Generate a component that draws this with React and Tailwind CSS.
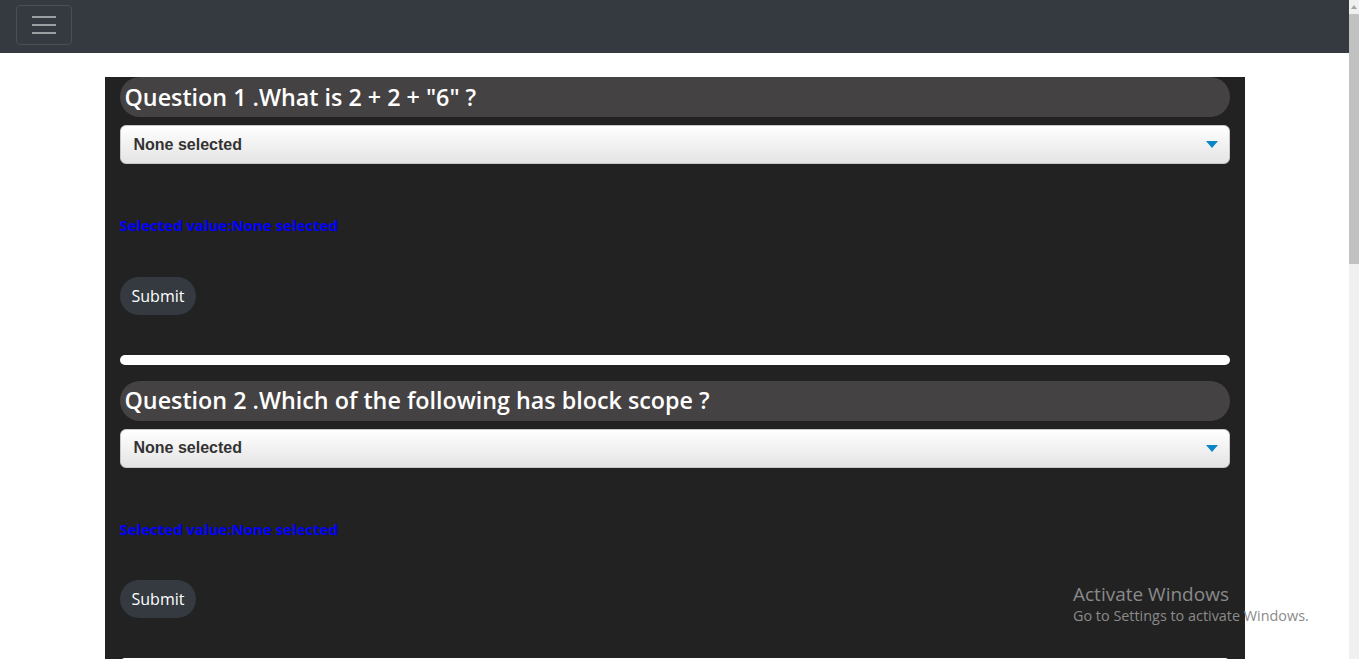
import { useState } from "react";

const questions = [
  { id: 1, text: 'What is 2 + 2 + "6" ?' },
  { id: 2, text: "Which of the following has block scope ?" },
];

const QuestionCard = ({ question }) => {
  const [value] = useState("None selected");

  return (
    <div className="flex flex-col">
      <h2 className="flex h-10 items-center rounded-full bg-[#454243] px-[5px] font-['Open_Sans',sans-serif] text-[23.3px] font-semibold text-white">
        Question {question.id} .{question.text}
      </h2>
      <div className="mt-2 flex h-[39px] items-center justify-between rounded-md border border-[#c8c8c8] bg-gradient-to-b from-white to-[#e4e4e4] pl-[13px] pr-[11px]">
        <span className="font-['Liberation_Sans',sans-serif] text-base font-bold text-[#333333]">{value}</span>
        <svg width="12" height="7" viewBox="0 0 12 7"><path d="M0 0h12L6 7z" fill="#0a86c4" /></svg>
      </div>
      <p className="mt-[50px] font-['Open_Sans',sans-serif] text-[15px] font-bold text-[#0000ff]">Selected value:{value}</p>
      <div className="mt-[40px]">
        <button className="h-[38px] rounded-full bg-[#343a40] px-3 font-['Open_Sans',sans-serif] text-[16px] text-white">Submit</button>
      </div>
      <div className="mt-10 h-[10px] rounded-full bg-white" />
    </div>
  );
};

const App = () => {
  return (
    <div className="flex h-[659px] w-full overflow-hidden bg-white">
      <div className="flex min-w-0 flex-1 flex-col">
        <nav className="flex h-[53px] shrink-0 items-start bg-[#343a40] px-4 pt-[5px]">
          <button className="flex h-10 w-14 flex-col items-center justify-center gap-[6px] rounded border border-[#4a4f55]">
            <span className="h-[2px] w-6 bg-[#9c9fa2]" />
            <span className="h-[2px] w-6 bg-[#9c9fa2]" />
            <span className="h-[2px] w-6 bg-[#9c9fa2]" />
          </button>
        </nav>
        <main className="mx-auto mt-6 flex w-[1140px] flex-1 flex-col gap-4 bg-[#222222] px-[15px]">
          {questions.map((q) => (
            <QuestionCard key={q.id} question={q} />
          ))}
        </main>
      </div>
      <div className="flex w-[10px] shrink-0 flex-col bg-[#f0f0f0]">
        <div className="flex h-[14px] items-center justify-center">
          <svg width="6" height="4" viewBox="0 0 6 4"><path d="M0 4L3 0l3 4z" fill="#a3a3a3" /></svg>
        </div>
        <div className="h-[250px] bg-[#c1c1c1]" />
      </div>
      <div className="pointer-events-none absolute left-[1073px] top-[582px] font-['Open_Sans',sans-serif] text-[#8a8a8a]">
        <p className="text-[19px] leading-6">Activate Windows</p>
        <p className="text-[14.4px] leading-5">Go to Settings to activate Windows.</p>
      </div>
    </div>
  );
};

export default App;
